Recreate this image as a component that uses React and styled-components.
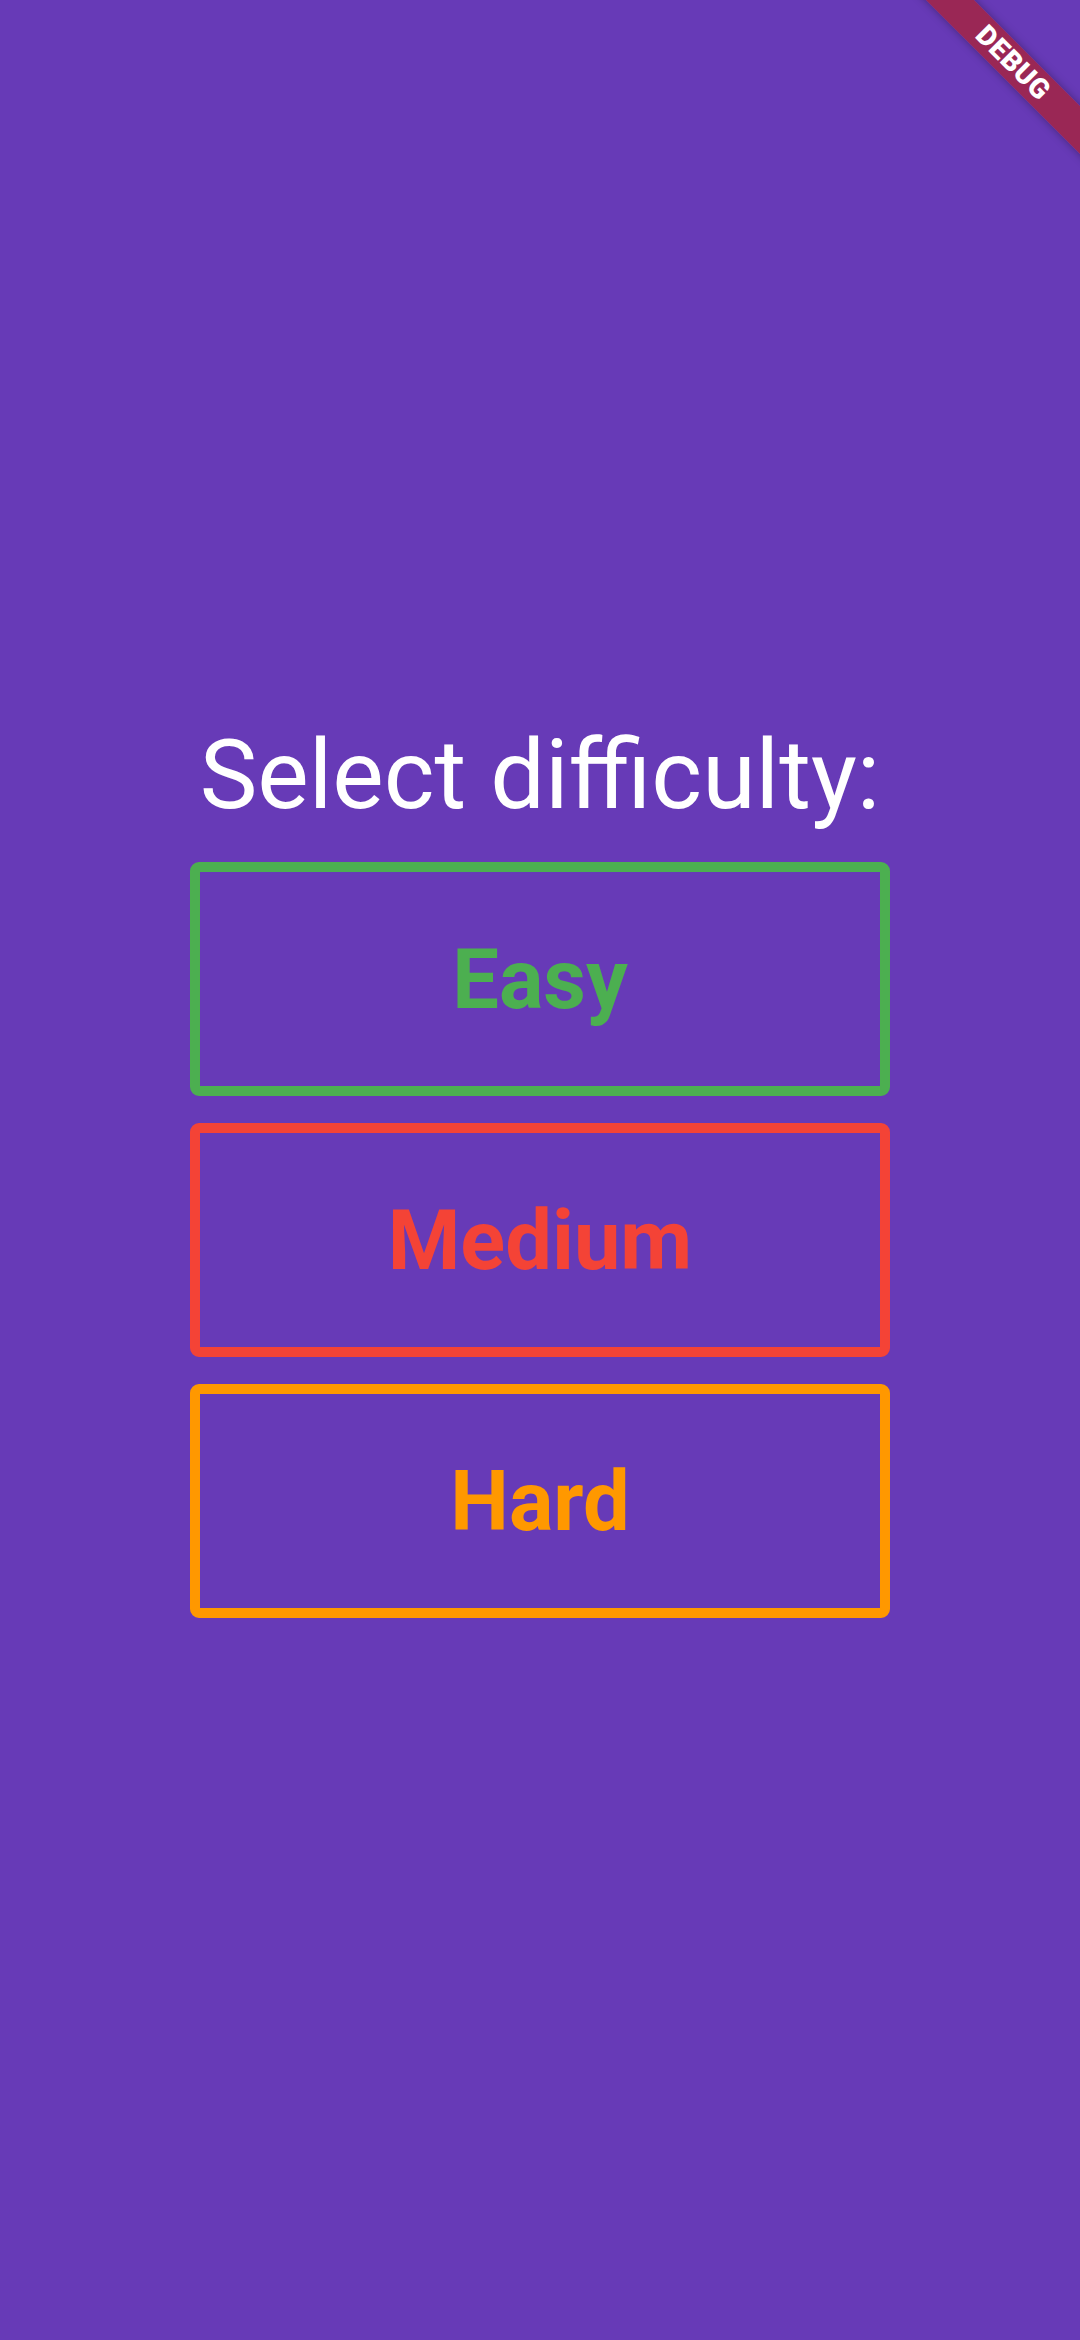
import React from "react";
import styled, { createGlobalStyle } from "styled-components";

const Global = createGlobalStyle`
  html, body { margin: 0; padding: 0; background: #673ab7; }
  body { font-family: Roboto, "Noto Sans", sans-serif; }
`;

const Screen = styled.div`
  position: relative;
  width: 1080px;
  height: 2340px;
  overflow: hidden;
  background: #673ab7;
  display: flex;
  flex-direction: column;
  align-items: center;
  padding-top: 719px;
  box-sizing: border-box;
`;

const Title = styled.h1`
  margin: 0 0 30px 0;
  font-family: Roboto, sans-serif;
  font-weight: 400;
  font-size: 97px;
  line-height: 113px;
  color: #ffffff;
  white-space: nowrap;
`;

const Options = styled.div`
  display: flex;
  flex-direction: column;
  gap: 27px;
`;

const Option = styled.button`
  width: 700px;
  height: 234px;
  box-sizing: border-box;
  border: 10px solid ${(p) => p.$color};
  border-radius: 9px;
  background: transparent;
  display: flex;
  align-items: center;
  justify-content: center;
  padding: 0;
  font-family: Roboto, sans-serif;
  font-weight: 700;
  font-size: 83px;
  line-height: 1;
  color: ${(p) => p.$color};
  cursor: pointer;
`;

const Banner = styled.div`
  position: absolute;
  left: 863px;
  top: 46px;
  width: 300px;
  height: 34px;
  transform: rotate(45deg);
  background: rgba(183, 28, 28, 0.63);
  box-shadow: 0 0 8px rgba(0, 0, 0, 0.35);
  display: flex;
  align-items: center;
  justify-content: center;
  color: #ffffff;
  font-family: Roboto, sans-serif;
  font-weight: 900;
  font-size: 28px;
  line-height: 1;
  letter-spacing: 0.5px;
`;

const options = [
  { label: "Easy", color: "#4caf50" },
  { label: "Medium", color: "#f44336" },
  { label: "Hard", color: "#ff9800" },
];

export default function App() {
  return (
    <>
      <Global />
      <Screen>
        <Title>Select difficulty:</Title>
        <Options>
          {options.map((o) => (
            <Option key={o.label} $color={o.color}>
              {o.label}
            </Option>
          ))}
        </Options>
        <Banner>DEBUG</Banner>
      </Screen>
    </>
  );
}
